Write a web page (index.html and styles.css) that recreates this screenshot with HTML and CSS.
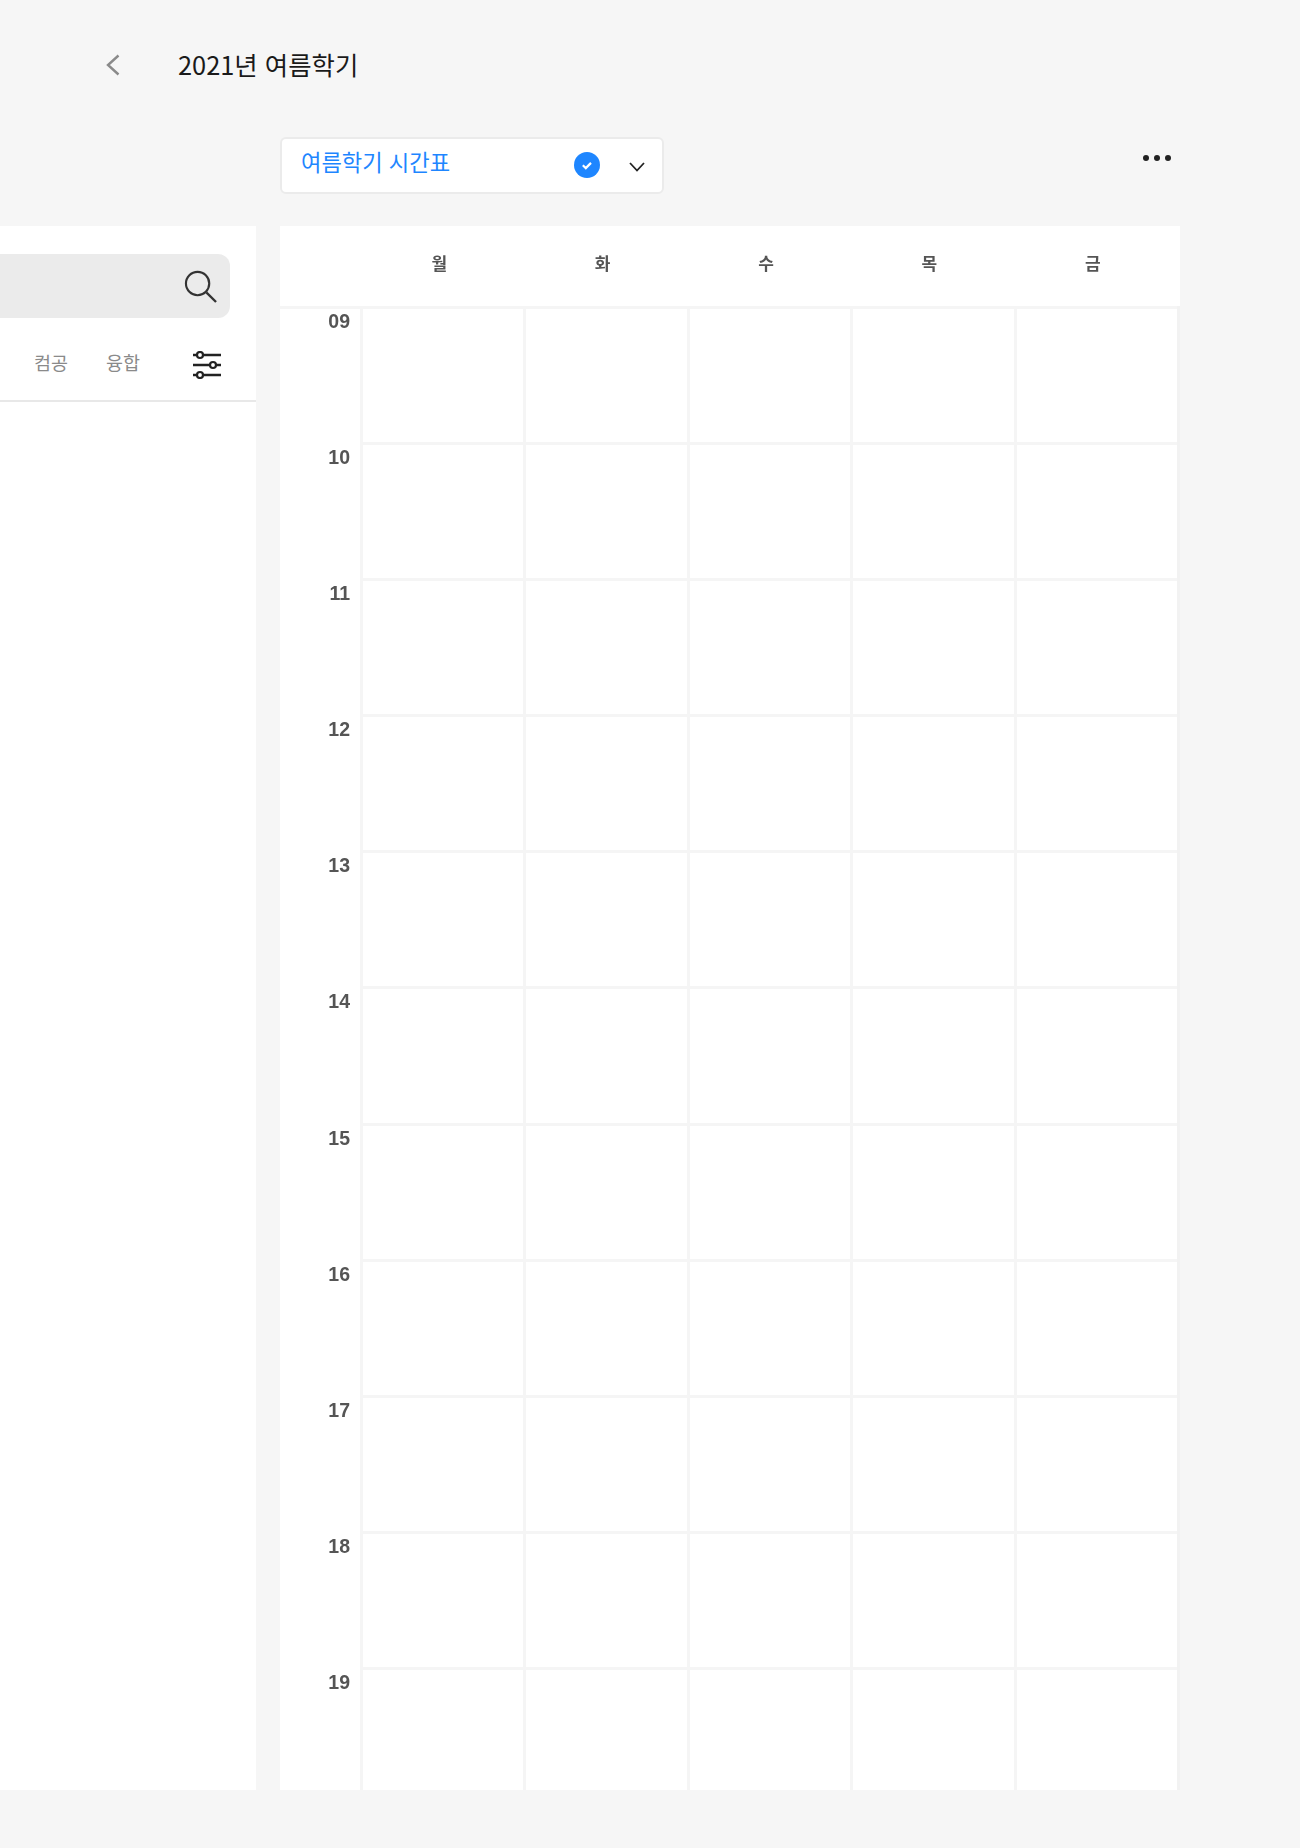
FILE: index.html
```html
<!DOCTYPE html>
<html lang="ko">

<head>
  <meta charset="UTF-8" />
  <meta name="viewport" content="width=device-width, initial-scale=1.0" />
  <title>2021년 여름학기</title>
  <link rel="stylesheet" href="styles.css">
</head>

<body>
  <header class="page-header">
    <svg class="back-icon" viewBox="0 0 14 22">
      <path d="M12.5 1.5L2 11l10.5 9.5" fill="none" stroke="#8a8a8a" stroke-width="2.4"></path>
    </svg>
    <h1>2021년 여름학기</h1>
  </header>

  <div class="layout">
    <div class="toolbar">
      <div class="table-select">
        <span class="table-name">여름학기 시간표</span>
        <svg class="check-icon" viewBox="0 0 26 26">
          <circle cx="13" cy="13" r="13" fill="#1e86ff"></circle>
          <path d="M8.8 13.3l3 2.8 5.2-5.2" fill="none" stroke="white" stroke-width="2.2"></path>
        </svg>
        <svg class="chevron-icon" viewBox="0 0 16 10">
          <path d="M1 1l7 7.5L15 1" fill="none" stroke="#222" stroke-width="1.8"></path>
        </svg>
      </div>
      <div class="more-btn"><span></span><span></span><span></span></div>
    </div>

    <!-- Left Panel -->
    <aside class="side-panel">
      <div class="search-box">
        <svg class="search-icon" viewBox="0 0 34 34">
          <circle cx="14" cy="14" r="12" fill="none" stroke="#333" stroke-width="2.2"></circle>
          <path d="M23 23l10 10" fill="none" stroke="#333" stroke-width="2.4"></path>
        </svg>
      </div>
      <div class="tabs">
        <span class="tab">컴공</span>
        <span class="tab">융합</span>
        <svg class="filter-icon" viewBox="0 0 28 28">
          <path d="M0 4h3.500M10.500 4H28M0 14h16.500M23.500 14H28M0 24h3.500M10.500 24H28" fill="none" stroke="#222" stroke-width="2.4"></path>
          <circle cx="7" cy="4" r="3" fill="none" stroke="#222" stroke-width="2.2"></circle>
          <circle cx="20" cy="14" r="3" fill="none" stroke="#222" stroke-width="2.2"></circle>
          <circle cx="7" cy="24" r="3" fill="none" stroke="#222" stroke-width="2.2"></circle>
        </svg>
      </div>
    </aside>

    <!-- Timetable -->
    <main class="timetable">
      <div class="days">
        <span></span><span>월</span><span>화</span><span>수</span><span>목</span><span>금</span>
      </div>
      <div class="hour"><span class="time">09</span><i></i><i></i><i></i><i></i><i></i></div>
      <div class="hour"><span class="time">10</span><i></i><i></i><i></i><i></i><i></i></div>
      <div class="hour"><span class="time">11</span><i></i><i></i><i></i><i></i><i></i></div>
      <div class="hour"><span class="time">12</span><i></i><i></i><i></i><i></i><i></i></div>
      <div class="hour"><span class="time">13</span><i></i><i></i><i></i><i></i><i></i></div>
      <div class="hour"><span class="time">14</span><i></i><i></i><i></i><i></i><i></i></div>
      <div class="hour"><span class="time">15</span><i></i><i></i><i></i><i></i><i></i></div>
      <div class="hour"><span class="time">16</span><i></i><i></i><i></i><i></i><i></i></div>
      <div class="hour"><span class="time">17</span><i></i><i></i><i></i><i></i><i></i></div>
      <div class="hour"><span class="time">18</span><i></i><i></i><i></i><i></i><i></i></div>
      <div class="hour"><span class="time">19</span><i></i><i></i><i></i><i></i><i></i></div>
    </main>
  </div>
</body>

</html>
```

FILE: styles.css
```css
/* General Styles */
body {
  margin: 0;
  height: 1848px;
  overflow: hidden;
  background: #f6f6f6;
  color: #222;
  font-family: "Noto Sans CJK KR", "Noto Sans", sans-serif;
}

/* Page Header */
.page-header {
  height: 130px;
  padding-left: 106px;
  box-sizing: border-box;
  display: flex;
  align-items: center;
  gap: 58px;
}

.back-icon {
  width: 14px;
  height: 22px;
}

h1 {
  margin: -2px 0 0;
  font-size: 25.4px;
  font-weight: 400;
  color: #1a1a1a;
}

/* Layout */
.layout {
  display: grid;
  grid-template-columns: 256px 900px;
  grid-template-rows: 96px 1564px;
  column-gap: 24px;
}

/* Toolbar */
.toolbar {
  grid-column: 2;
  grid-row: 1;
  height: 57px;
  margin-top: 7px;
  display: flex;
  align-items: flex-start;
  justify-content: space-between;
}

.table-select {
  width: 384px;
  height: 57px;
  box-sizing: border-box;
  padding: 0 17px 0 19px;
  background: white;
  border: 2px solid #ebebeb;
  border-radius: 6px;
  display: flex;
  align-items: center;
}

.table-name {
  flex: 1;
  margin-top: -10px;
  font-size: 22.2px;
  color: #1e86ff;
}

.check-icon {
  width: 26px;
  height: 26px;
  margin: -1px 29px 0 0;
}

.chevron-icon {
  width: 16px;
  height: 10px;
  margin-top: 2px;
}

.more-btn {
  display: flex;
  gap: 5px;
  margin: 18px 9px 0 0;
}

.more-btn span {
  width: 6px;
  height: 6px;
  border-radius: 50%;
  background: #222;
}

/* Side Panel */
.side-panel {
  grid-column: 1;
  grid-row: 2;
  background: white;
}

.search-box {
  height: 64px;
  margin: 28px 26px 0 0;
  padding-right: 13px;
  background: #ebebeb;
  border-radius: 0 12px 12px 0;
  display: flex;
  align-items: center;
  justify-content: flex-end;
}

.search-icon {
  width: 33px;
  height: 33px;
}

.tabs {
  height: 84px;
  padding-right: 35px;
  box-sizing: border-box;
  border-bottom: 2px solid #e8e8e8;
  display: flex;
  align-items: center;
  justify-content: flex-end;
}

.tab {
  margin: 6px 38px 0 0;
  font-size: 18.500px;
  color: #8a8a8a;
}

.tab + .filter-icon {
  margin-left: 15px;
}

.filter-icon {
  width: 28px;
  height: 28px;
  margin-top: 11px;
}

/* Timetable */
.timetable {
  grid-column: 2;
  grid-row: 2;
  overflow: hidden;
  background: white;
  filter: blur(0.5px);
}

.days,
.hour {
  display: grid;
  grid-template-columns: 80px repeat(5, 163.4px);
}

.days {
  height: 80px;
  align-items: center;
  text-align: center;
  font-size: 17px;
  font-weight: 700;
  color: #555;
}

.days span {
  margin: -8px 5px 0 0;
}

.hour {
  height: 136.1px;
  box-sizing: border-box;
  border-right: 3px solid #f2f2f2;
}

.hour i {
  border-top: 3px solid #f5f5f5;
  border-left: 3px solid #f5f5f5;
}

.time {
  padding: 0 10px 0 0;
  border-top: 3px solid transparent;
  text-align: right;
  font-family: "Liberation Sans", sans-serif;
  font-size: 19.5px;
  line-height: 24px;
  font-weight: 700;
  color: #555;
}

.days + .hour .time {
  border-top-color: #f5f5f5;
}
```
